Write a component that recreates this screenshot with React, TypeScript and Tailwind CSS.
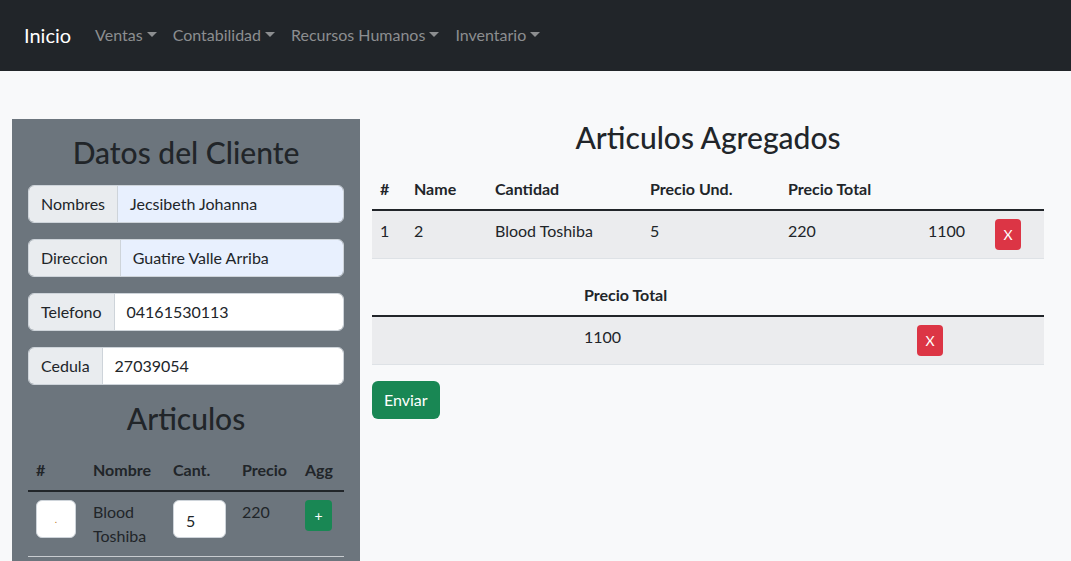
import React from "react";

const font = { fontFamily: "Lato, 'Noto Sans', sans-serif" };

function Caret() {
  return (
    <span className="ml-[4px] inline-block align-[3px] border-x-[5px] border-t-[5px] border-x-transparent border-t-current" />
  );
}

function NavItem({ label }: { label: string }) {
  return (
    <a className="px-2 text-[16px] text-[#8c8e90] flex items-center">
      {label}
      <Caret />
    </a>
  );
}

function InputGroup({
  label,
  value,
  autofill,
}: {
  label: string;
  value: string;
  autofill?: boolean;
}) {
  return (
    <div className="flex h-[38px] mb-4 rounded-[6px] border border-[#ced4da] overflow-hidden">
      <span className="flex items-center px-3 bg-[#e9ecef] border-r border-[#ced4da] text-[#212529] text-[16px]">
        {label}
      </span>
      <span
        className={`flex-1 flex items-center px-3 text-[16px] text-[#212529] ${
          autofill ? "bg-[#e8f0fe]" : "bg-white"
        }`}
      >
        {value}
      </span>
    </div>
  );
}

function XButton() {
  return (
    <span className="inline-flex items-center justify-center w-[26px] h-[31px] rounded-[4px] bg-[#dc3545] text-white text-[14px]">
      X
    </span>
  );
}

export default function App() {
  return (
    <div style={font} className="min-h-screen bg-[#f8f9fa] text-[#212529] leading-6">
      {/* Navbar */}
      <nav className="h-[71px] bg-[#212529] flex items-center px-6 pb-[2px]">
        <span className="text-white text-[20px] mr-4">Inicio</span>
        <div className="flex items-center">
          <NavItem label="Ventas" />
          <NavItem label="Contabilidad" />
          <NavItem label="Recursos Humanos" />
          <NavItem label="Inventario" />
        </div>
      </nav>

      <div className="flex gap-3 px-3 pt-[48px]">
        {/* Left panel */}
        <div className="w-[348px] bg-[#6c757d] px-4 pt-[15px]">
          <h2 className="text-center text-[30px] leading-[37px] font-medium mb-[14px]">
            Datos del Cliente
          </h2>
          <InputGroup label="Nombres" value="Jecsibeth Johanna" autofill />
          <InputGroup label="Direccion" value="Guatire Valle Arriba" autofill />
          <InputGroup label="Telefono" value="04161530113" />
          <InputGroup label="Cedula" value="27039054" />
          <h2 className="text-center text-[30px] leading-[37px] font-medium mt-[-1px] mb-[13px]">
            Articulos
          </h2>
          <table className="w-full text-[16px] border-collapse">
            <thead>
              <tr className="border-b-2 border-[#212529]">
                <th className="text-left font-bold px-2 py-2 w-[57px]">#</th>
                <th className="text-left font-bold px-2 py-2 w-[80px]">Nombre</th>
                <th className="text-left font-bold px-2 py-2 w-[69px]">Cant.</th>
                <th className="text-left font-bold px-2 py-2 w-[63px]">Precio</th>
                <th className="text-left font-bold px-2 py-2">Agg</th>
              </tr>
            </thead>
            <tbody>
              <tr className="border-b border-[#c8ccd0] align-top">
                <td className="px-2 py-2">
                  <div className="w-[40px] h-[38px] bg-white rounded-[6px] border border-[#ced4da] flex items-center justify-center text-[10px] text-[#c07a30]">
                    .
                  </div>
                </td>
                <td className="px-2 py-2 leading-[24px]">
                  Blood
                  <br />
                  Toshiba
                </td>
                <td className="px-2 py-2">
                  <div className="w-[53px] h-[38px] bg-white rounded-[6px] border border-[#ced4da] flex items-center px-3 pt-[4px]">
                    5
                  </div>
                </td>
                <td className="px-2 py-2 leading-[24px]">220</td>
                <td className="px-2 py-2">
                  <span className="inline-flex items-center justify-center w-[27px] h-[31px] rounded-[4px] bg-[#198754] text-white text-[14px]">
                    +
                  </span>
                </td>
              </tr>
            </tbody>
          </table>
          <div className="h-[40px]" />
        </div>

        {/* Right side */}
        <div className="w-[672px]">
          <h2 className="text-center text-[30px] leading-[37px] font-medium mb-[13px]">
            Articulos Agregados
          </h2>
          <table className="w-full text-[16px] border-collapse">
            <thead>
              <tr className="border-b-2 border-[#212529]">
                <th className="text-left font-bold px-2 py-2 w-[34px]">#</th>
                <th className="text-left font-bold px-2 py-2 w-[81px]">Name</th>
                <th className="text-left font-bold px-2 py-2 w-[155px]">Cantidad</th>
                <th className="text-left font-bold px-2 py-2 w-[138px]">Precio Und.</th>
                <th className="text-left font-bold px-2 py-2 w-[140px]">Precio Total</th>
                <th className="text-left font-bold px-2 py-2 w-[67px]"></th>
                <th className="text-left font-bold px-2 py-2"></th>
              </tr>
            </thead>
            <tbody>
              <tr className="bg-[#ebecee] border-b border-[#dee2e6] align-top">
                <td className="px-2 py-2">1</td>
                <td className="px-2 py-2">2</td>
                <td className="px-2 py-2">Blood Toshiba</td>
                <td className="px-2 py-2">5</td>
                <td className="px-2 py-2">220</td>
                <td className="px-2 py-2">1100</td>
                <td className="px-2 py-2">
                  <XButton />
                </td>
              </tr>
            </tbody>
          </table>

          <table className="w-full text-[16px] border-collapse mt-4">
            <thead>
              <tr className="border-b-2 border-[#212529]">
                <th className="text-left font-bold px-2 py-2 w-[204px]"></th>
                <th className="text-left font-bold px-2 py-2 w-[333px]">Precio Total</th>
                <th className="text-left font-bold px-2 py-2"></th>
              </tr>
            </thead>
            <tbody>
              <tr className="bg-[#ebecee] border-b border-[#dee2e6] align-top">
                <td className="px-2 py-2"></td>
                <td className="px-2 py-2">1100</td>
                <td className="px-2 py-2">
                  <XButton />
                </td>
              </tr>
            </tbody>
          </table>

          <button className="mt-4 h-[38px] px-3 rounded-[6px] bg-[#198754] text-white text-[16px]">
            Enviar
          </button>
        </div>
      </div>
    </div>
  );
}
